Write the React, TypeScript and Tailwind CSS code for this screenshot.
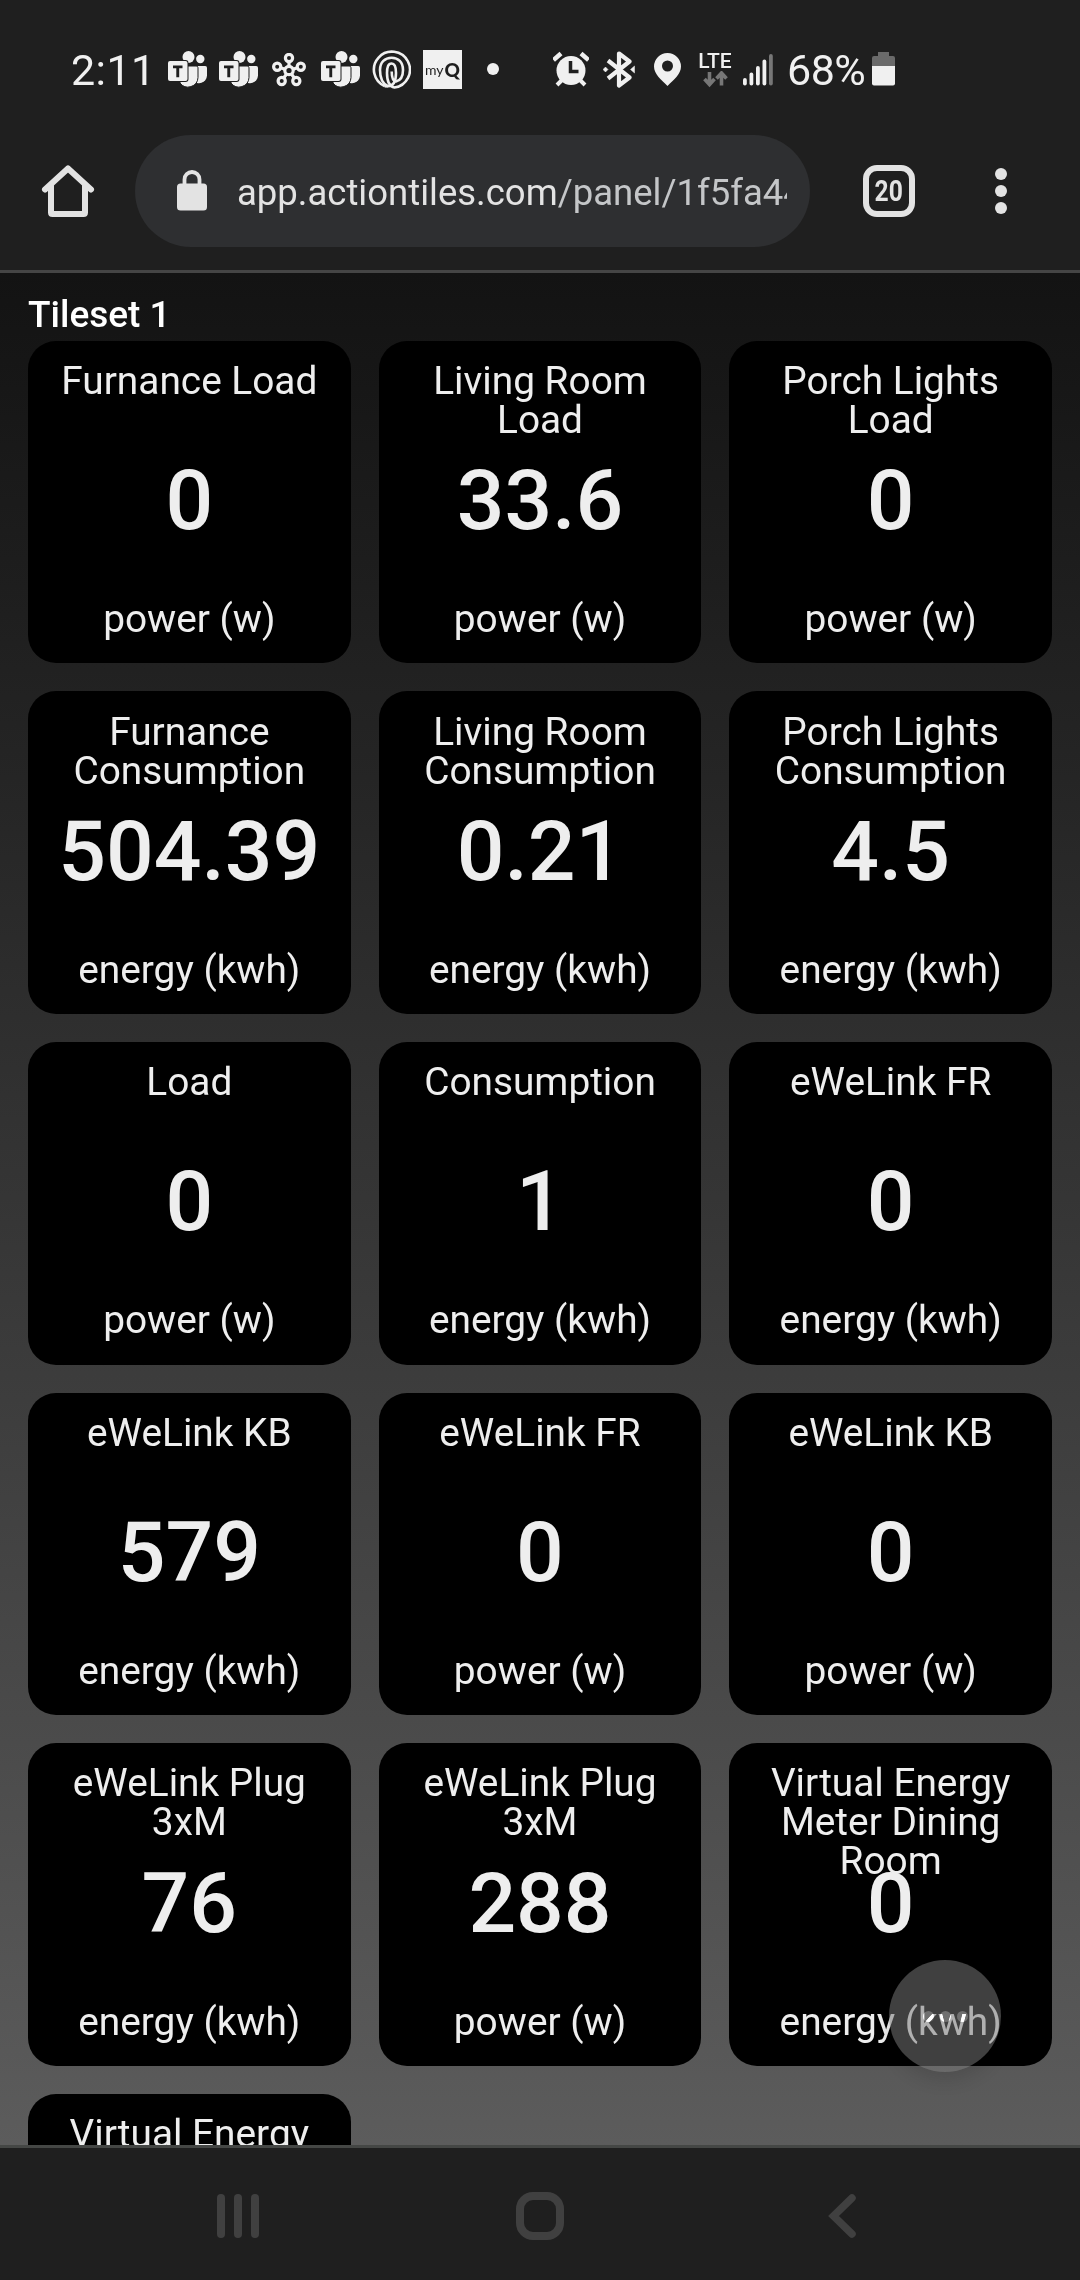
interface Tile {
  title: string;
  value: string;
  unit: string;
}

const POWER = "power (w)";
const ENERGY = "energy (kwh)";

const TILES: Tile[] = [
  { title: "Furnance Load", value: "0", unit: POWER },
  { title: "Living Room Load", value: "33.6", unit: POWER },
  { title: "Porch Lights Load", value: "0", unit: POWER },
  { title: "Furnance Consumption", value: "504.39", unit: ENERGY },
  { title: "Living Room Consumption", value: "0.21", unit: ENERGY },
  { title: "Porch Lights Consumption", value: "4.5", unit: ENERGY },
  { title: "Load", value: "0", unit: POWER },
  { title: "Consumption", value: "1", unit: ENERGY },
  { title: "eWeLink FR", value: "0", unit: ENERGY },
  { title: "eWeLink KB", value: "579", unit: ENERGY },
  { title: "eWeLink FR", value: "0", unit: POWER },
  { title: "eWeLink KB", value: "0", unit: POWER },
  { title: "eWeLink Plug 3xM", value: "76", unit: ENERGY },
  { title: "eWeLink Plug 3xM", value: "288", unit: POWER },
  { title: "Virtual Energy Meter Dining Room", value: "0", unit: ENERGY },
  { title: "Virtual Energy", value: "", unit: "" },
];

function TeamsIcon() {
  return (
    <svg width="39" height="37" viewBox="0 0 39 37" fill="#f0f0f0">
      <circle cx="20.5" cy="6" r="6" />
      <circle cx="32.3" cy="8" r="4.2" />
      <path d="M29 15h8.2a1.8 1.8 0 0 1 1.8 1.8v7.5a8 8 0 0 1-10 7.6z" />
      <path d="M13 15h15.2a1.8 1.8 0 0 1 1.8 1.8v9.7a10 10 0 0 1-18 5.5z" stroke="#1f1f1f" strokeWidth="1" />
      <rect x="-1" y="9" width="21.5" height="22" rx="3" fill="#1f1f1f" />
      <rect x="0" y="10" width="19.5" height="20" rx="2" />
      <path d="M5 14.5h9.5v2.7h-3.3v9H8.3v-9H5z" fill="#1f1f1f" />
    </svg>
  );
}

function HubIcon() {
  return (
    <svg width="34" height="34" viewBox="0 0 34 34" fill="none" stroke="#f0f0f0" strokeWidth="3.2">
      <circle cx="17" cy="17.5" r="4.2" />
      <circle cx="17" cy="5" r="3.6" />
      <circle cx="5.2" cy="13.7" r="3.6" />
      <circle cx="28.8" cy="13.7" r="3.6" />
      <circle cx="9.7" cy="28" r="3.6" />
      <circle cx="24.3" cy="28" r="3.6" />
      <path d="M17 8.500v5M8.500 14.800l4.500 1.500M25.500 14.800 21 16.300M11.600 25l3-4M22.400 25l-3-4" />
    </svg>
  );
}

function LoopsIcon() {
  return (
    <svg width="39" height="39" viewBox="0 0 39 39" fill="none" stroke="#f0f0f0" strokeWidth="2.6">
      <path d="M13 36.300A18 18 0 1 1 22.500 37.500C17 36.500 15 30 15 23c0-6 1.300-9.500 4.600-9.500S24 17 24 23c0 8-2.500 13-8 13.300" />
      <path d="M16 36.300C11 34 8 28 8 20 8 12 13 7.700 19.600 7.700S31 12 31 20c0 6.500-2.700 10.500-7 11.500-3-.500-4.300-3.500-4.300-10" />
      <path d="M13 36.300h3" />
    </svg>
  );
}

function StatusBar() {
  return (
    <div className="flex h-[135px] items-start bg-[#1f1f1f] text-[43px] leading-[50px] text-[#f0f0f0]">
      <div className="mt-[45px] ml-[71px] w-[96px] tracking-[0.4px]">2:11</div>
      <div className="mt-[50px] flex w-[292px] items-start">
        <div className="mt-px ml-px w-[51px] shrink-0">
          <TeamsIcon />
        </div>
        <div className="mt-px w-[53px] shrink-0">
          <TeamsIcon />
        </div>
        <div className="mt-[3px] w-[49px] shrink-0">
          <HubIcon />
        </div>
        <div className="mt-px w-[51px] shrink-0">
          <TeamsIcon />
        </div>
        <div className="w-[51px] shrink-0">
          <LoopsIcon />
        </div>
        <div className="flex size-[39px] shrink-0 items-center justify-center gap-px bg-[#f0f0f0] text-[#1f1f1f]">
          <span className="font-[Lato] text-[14px] leading-none">my</span>
          <span className="font-[Lato] text-[19px] leading-none font-black">Q</span>
        </div>
      </div>
      <div className="mt-[63px] ml-[28px] size-3 rounded-full bg-[#f0f0f0]" />
      <svg className="mt-[50px] ml-[54px]" width="36" height="38" viewBox="0 0 36 38" fill="#f0f0f0">
        <circle cx="18" cy="20.5" r="14.5" />
        <path d="M0.500 10 8 3.500M28 3.500 35.500 10" stroke="#f0f0f0" strokeWidth="4.5" />
        <path d="m4 35 5-5M32 35l-5-5" stroke="#f0f0f0" strokeWidth="4" />
        <path d="M17.500 11v10.500h8" fill="none" stroke="#1f1f1f" strokeWidth="3.5" />
      </svg>
      <svg className="mt-[51px] ml-[14px]" width="33" height="37" viewBox="0 0 33 37" fill="none" stroke="#f0f0f0" strokeWidth="4.2">
        <path d="M5 9.500 26.500 26.500 16 34.500v-32L26.500 10.500 5 27.500" strokeLinejoin="round" />
        <path d="m0 18.500 2.500-2.500L5 18.500 2.500 21zM27.500 18.500l4-3.500v7z" fill="#f0f0f0" strokeWidth="0.5" />
      </svg>
      <svg className="mt-[53px] ml-[18px]" width="27" height="33" viewBox="0 0 27 33" fill="#f0f0f0">
        <path
          fillRule="evenodd"
          d="M13.500 0A13.500 13.500 0 0 0 0 13.500C0 21 7 26.500 13.500 33 20 26.500 27 21 27 13.500A13.500 13.500 0 0 0 13.500 0zm0 7.500a5.500 5.500 0 1 1 0 11 5.500 5.500 0 0 1 0-11z"
        />
      </svg>
      <div className="mt-[51px] ml-[16px] flex w-[36px] flex-col items-center">
        <span className="text-[21px] leading-5 font-medium">LTE</span>
        <svg width="25" height="17" viewBox="0 0 25 17" fill="none" stroke="#777" strokeWidth="3.6">
          <path d="M6.500 1v12M1.500 8l5 5.500 5-5.500M18.500 14.500v-12M13.500 7.500l5-5.500 5 5.500" />
        </svg>
      </div>
      <svg className="mt-[54px] ml-[10px]" width="30" height="32" viewBox="0 0 30 32" fill="#f0f0f0">
        <rect y="24" width="3.8" height="7.5" rx="1.9" />
        <rect x="6.500" y="18.500" width="3.8" height="13" rx="1.9" />
        <rect x="13" y="12" width="3.8" height="19.5" rx="1.9" />
        <rect x="19.500" y="5.500" width="3.8" height="26" rx="1.9" />
        <rect x="26" y="0" width="3.8" height="31.5" rx="1.9" fill="#777" />
      </svg>
      <div className="mt-[45px] ml-[14px] w-[85px] tracking-[-0.5px]">68%</div>
      <svg className="mt-[52px]" width="23" height="34" viewBox="0 0 23 34">
        <path d="M6 0h11v4h4a2 2 0 0 1 2 2v8H0V6a2 2 0 0 1 2-2h4z" fill="#6a6a6a" />
        <path d="M0 14h23v17.500a2 2 0 0 1-2 2H2a2 2 0 0 1-2-2z" fill="#f0f0f0" />
      </svg>
    </div>
  );
}

function BrowserBar() {
  return (
    <div className="flex h-[138px] items-start border-b-3 border-[#454545] bg-[#1f1f1f]">
      <svg className="mt-[29px] ml-[41px]" width="54" height="54" viewBox="0 0 54 54" fill="none" stroke="#e3e3e3" strokeWidth="6" strokeLinecap="round" strokeLinejoin="round">
        <path d="M4 25.500 27 4.500l23 21" />
        <path d="M10 22v26.500q0 1.500 1.500 1.500h31q1.500 0 1.500-1.500V22" />
      </svg>
      <div className="ml-10 flex h-28 w-[675px] items-center rounded-full bg-[#2e2f31] pr-[23px] pl-[42px]">
        <svg className="shrink-0" width="30" height="42" viewBox="0 0 30 42">
          <rect y="13.500" width="30" height="27" rx="3.5" fill="#e3e3e3" />
          <path d="M7.500 15v-5.500a7.500 7.500 0 0 1 15 0V15" fill="none" stroke="#e3e3e3" strokeWidth="3.8" />
        </svg>
        <div className="mt-[3px] ml-[30px] overflow-hidden text-[36.5px] leading-[44px] whitespace-nowrap text-[#c4c6c8]">
          <span className="text-[#e3e3e3]">app.actiontiles.com</span>/panel/1f5fa44
        </div>
      </div>
      <div className="mt-[30px] ml-[53px] flex h-[52px] w-[52px] items-center justify-center rounded-[14px] border-6 border-[#e3e3e3]">
        <span className="scale-x-85 text-[29px] leading-none font-bold text-[#e3e3e3]">20</span>
      </div>
      <div className="mt-[33px] ml-[80px] flex flex-col gap-[5px]">
        <span className="size-3 rounded-full bg-[#e3e3e3]" />
        <span className="size-3 rounded-full bg-[#e3e3e3]" />
        <span className="size-3 rounded-full bg-[#e3e3e3]" />
      </div>
    </div>
  );
}

function TileCard({ title, value, unit }: Tile) {
  return (
    <div className="relative h-[322.55px] rounded-[28px] bg-black px-[30px] pt-[20.3px] text-center text-[38.8px] leading-[39px] text-[#eee]">
      <div className="h-[96.2px]">{title}</div>
      <div className="-mx-[30px] h-[142px] text-[84px] leading-[88px] font-medium">{value}</div>
      <div className="whitespace-nowrap">{unit}</div>
    </div>
  );
}

function NavBar() {
  return (
    <div className="flex h-[135px] items-start border-t-3 border-[#454745] bg-[#1f1f1f]">
      <div className="mt-[46px] ml-[217px] flex gap-[9px]">
        <span className="h-11 w-2 rounded-full bg-[#404040]" />
        <span className="h-11 w-2 rounded-full bg-[#404040]" />
        <span className="h-11 w-2 rounded-full bg-[#404040]" />
      </div>
      <div className="mt-11 ml-[257px] size-12 rounded-[17px] border-8 border-[#404040]" />
      <svg className="mt-[46px] ml-[264px]" width="28" height="44" viewBox="0 0 28 44" fill="none" stroke="#404040" strokeWidth="7.5" strokeLinecap="round">
        <path d="M24 4 5.500 22 24 40" />
      </svg>
    </div>
  );
}

export default function App() {
  return (
    <div className="flex h-[2280px] w-[1080px] flex-col overflow-hidden font-[Roboto,sans-serif]">
      <StatusBar />
      <BrowserBar />
      <main className="relative h-[1872px] overflow-hidden bg-linear-to-b from-[#131313] to-[#5c5c5c] px-7">
        <h1 className="h-[67.9px] pt-[20px] text-[37px] leading-[44px] font-medium text-white">Tileset 1</h1>
        <div className="grid grid-cols-3 gap-7">
          {TILES.map((tile, i) => (
            <TileCard key={i} {...tile} />
          ))}
        </div>
        {/* floating menu button */}
        <div className="absolute top-[1687px] left-[889px] flex size-28 items-center justify-center gap-[6px] rounded-full bg-[#797979]/53 shadow-[0_8px_18px_rgba(0,0,0,0.12)]">
          <span className="size-[11px] rounded-full bg-[#6d6d6d] mix-blend-color-dodge" />
          <span className="size-[11px] rounded-full bg-[#6d6d6d] mix-blend-color-dodge" />
          <span className="size-[11px] rounded-full bg-[#6d6d6d] mix-blend-color-dodge" />
        </div>
      </main>
      <NavBar />
    </div>
  );
}
